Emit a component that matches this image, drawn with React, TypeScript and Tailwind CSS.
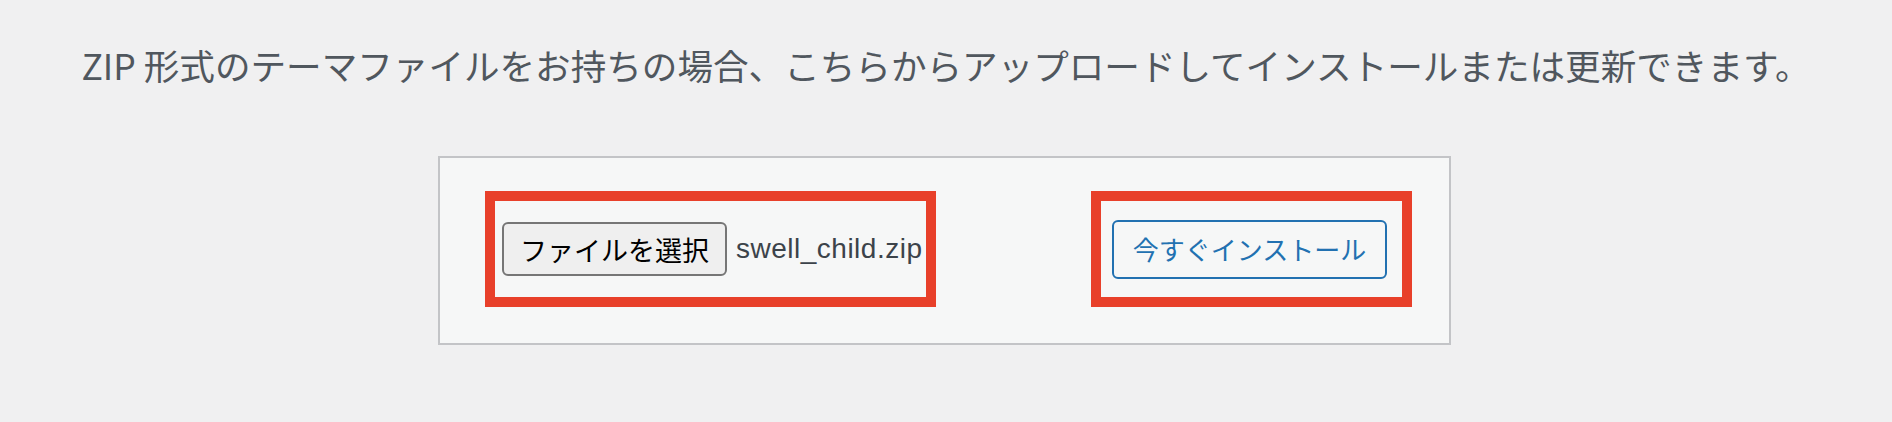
const jp = "font-['Noto_Sans_CJK_JP','Noto_Sans',sans-serif]";

export default function App() {
  return (
    <div className="min-h-[422px] w-full bg-[#f0f0f1]">
      <p
        className={`${jp} pt-[39px] text-center text-[35.6px] leading-[52px] text-[#50575e]`}
      >
        ZIP 形式のテーマファイルをお持ちの場合、こちらからアップロードしてインストールまたは更新できます。
      </p>

      <div className="ml-[438px] mt-[65px] flex h-[189px] w-[1013px] items-center justify-between border-2 border-[#c3c4c7] bg-[#f6f7f7] pl-[45px] pr-[37px] pb-[3px]">
        {/* file picker, marked in red */}
        <div className="flex h-[116px] w-[451px] items-center border-[10px] border-[#e8402a] pl-[7px]">
          <button
            className={`${jp} flex h-[54px] items-center rounded-[6px] border-2 border-[#767676] bg-[#efefef] px-[16px] text-[27px] leading-none text-black`}
          >
            ファイルを選択
          </button>
          <span className="ml-[9px] font-['Liberation_Sans',Arial,sans-serif] text-[28px] tracking-[0.5px] text-[#3c434a]">
            swell_child.zip
          </span>
        </div>

        {/* install button, marked in red */}
        <div className="flex h-[116px] w-[321px] items-center border-[10px] border-[#e8402a] pl-[11px]">
          <button
            className={`${jp} flex h-[59px] w-[275px] items-center justify-center rounded-[6px] border-2 border-[#2271b1] bg-[#f6f7f7] text-[26px] leading-none text-[#2271b1]`}
          >
            今すぐインストール
          </button>
        </div>
      </div>
    </div>
  );
}
